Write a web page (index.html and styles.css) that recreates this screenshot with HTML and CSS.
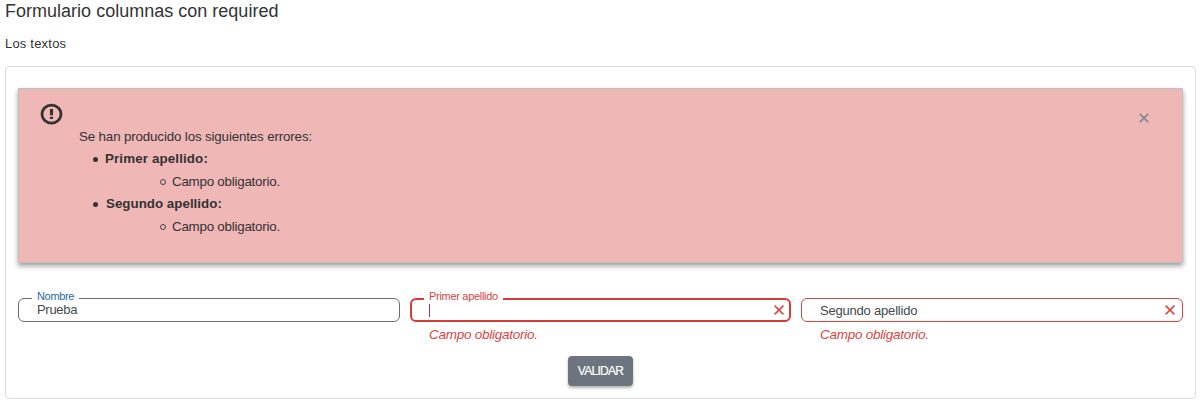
FILE: index.html
```html
<!DOCTYPE html>
<html lang="es">
<head>
<meta charset="utf-8">
<title>Formulario columnas con required</title>
<link rel="stylesheet" href="styles.css">
</head>
<body>
<h1 class="title"><span>Formulario columnas con required</span></h1>
<p class="intro"><span>Los textos</span></p>
<form class="card">
  <section class="alert">
    <svg class="alert-icon" viewBox="0 0 24 24"><ellipse cx="12" cy="11.6" rx="9.9" ry="9.4" fill="none" stroke="currentColor" stroke-width="2.8"/><path d="M10.4 6.2h3.2v6.6h-3.2zM10.4 14.3h3.2v2.4h-3.2z" fill="currentColor"/></svg>
    <div class="alert-body">
      <p class="alert-text"><span>Se han producido los siguientes errores:</span></p>
      <ul class="errors">
        <li><b class="b1">Primer apellido:</b>
          <ul class="details"><li><span>Campo obligatorio.</span></li></ul>
        </li>
        <li><b class="b2">Segundo apellido:</b>
          <ul class="details"><li><span>Campo obligatorio.</span></li></ul>
        </li>
      </ul>
    </div>
    <svg class="close" viewBox="0 0 10 10"><path d="M.8.8l8.4 8.4M9.2.8L.8 9.2"/></svg>
  </section>
  <div class="fields">
    <div class="field">
      <div class="outline">
        <span class="label label-name">Nombre</span>
        <span class="value filled">Prueba</span>
      </div>
    </div>
    <div class="field invalid focused">
      <div class="outline">
        <span class="label label-first">Primer apellido</span>
        <span class="caret"></span>
        <svg class="clear" viewBox="0 0 10 10"><path d="M.6.6l8.8 8.8M9.4.6L.6 9.4"/></svg>
      </div>
      <p class="hint"><span>Campo obligatorio.</span></p>
    </div>
    <div class="field invalid">
      <div class="outline">
        <span class="value placeholder">Segundo apellido</span>
        <svg class="clear" viewBox="0 0 10 10"><path d="M.6.6l8.8 8.8M9.4.6L.6 9.4"/></svg>
      </div>
      <p class="hint"><span>Campo obligatorio.</span></p>
    </div>
  </div>
  <button class="submit" type="button"><span>VALIDAR</span></button>
</form>
</body>
</html>
```
FILE: styles.css
```css
*, *::before { box-sizing: border-box; }
body { margin: 0; padding: 0 4px 0 5px; height: 404px; overflow: hidden; background: #fff; color: #333; font: 13px/22px "Liberation Sans", Arial, sans-serif; }
.title { margin: 0; font-size: 18px; line-height: 22px; font-weight: 400; letter-spacing: .01px; }
.intro { margin: 11px 0 12px; line-height: 21px; letter-spacing: .2px; }
.card { height: 333px; padding: 21px 12px 0; border: 1px solid #dcdcdc; border-radius: 4px; display: flex; flex-direction: column; }
.alert { height: 175px; display: flex; background: #f0b7b7; border: 1px solid #bfc1c1; box-shadow: 0 3px 5px rgba(0,0,0,.38); padding: 14px 33px 0 21px; }
.alert-icon { width: 23px; height: 23px; margin-right: 16px; }
.alert-body { flex: 1; padding-top: 22px; }
.alert-text { margin: 0; line-height: 23px; font-size: 13.33px; letter-spacing: -.14px; }
.errors { list-style: none; margin: 0; padding: 0 0 0 14px; line-height: 22.5px; }
.errors > li::before { content: ""; display: inline-block; width: 5px; height: 5px; margin-right: 7px; border-radius: 50%; background: #333; vertical-align: 1px; }
.b1 { font-size: 13.33px; letter-spacing: .14px; }
.b2 { margin-left: 1px; font-size: 13.33px; letter-spacing: .02px; }
.details { list-style: none; margin: 0; padding: 0 0 0 67px; font-size: 13.33px; letter-spacing: -.22px; }
.details li::before { content: ""; display: inline-block; width: 6px; height: 6px; margin-right: 6px; border: 1px solid #444; border-radius: 50%; vertical-align: 1px; }
.close { width: 10px; height: 10px; margin-top: 10px; fill: none; stroke: #838a91; stroke-width: 1.7; }
.fields { display: grid; grid-template-columns: 382px 381px 382px; gap: 10px; margin-top: 35px; height: 58px; }
.outline { position: relative; display: flex; align-items: center; height: 24px; padding: 0 7px 0 18px; border: 1px solid #6d6d6d; border-radius: 6px; }
.invalid .outline { border-color: #d9453f; }
.focused .outline { border: 2px solid #d63b37; padding: 0 5px 0 17px; }
.label { position: absolute; top: -10px; left: 13px; padding: 0 5px; height: 14px; line-height: 14px; background: #fff; color: #1d6d9e; font-size: 11px; letter-spacing: -.33px; white-space: nowrap; }
.focused .label { top: -11px; left: 12px; color: #d9453f; letter-spacing: -.3px; }
.label-name { width: 47px; }
.label-first { width: 79px; }
.value { color: #444950; font-size: 13px; letter-spacing: -.2px; }
.filled { letter-spacing: -.3px; }
.placeholder { padding-top: 1px; }
.caret { width: 1px; height: 13px; background: #c0302d; }
.clear { width: 10px; height: 10px; margin-left: auto; fill: none; stroke: #d9453f; stroke-width: 1.5; }
.hint { margin: 2px 0 0 19px; line-height: 22px; font-size: 13.5px; letter-spacing: -.26px; font-style: italic; color: #d9453f; }
.submit { align-self: center; width: 65px; height: 30px; padding: 0; border: 0; border-radius: 4px; background: #6c757d; color: #fff; font: 12px/30px "Liberation Sans", Arial, sans-serif; letter-spacing: -.7px; -webkit-text-stroke: .2px #fff; box-shadow: 0 2px 3px rgba(0,0,0,.3); }
```
